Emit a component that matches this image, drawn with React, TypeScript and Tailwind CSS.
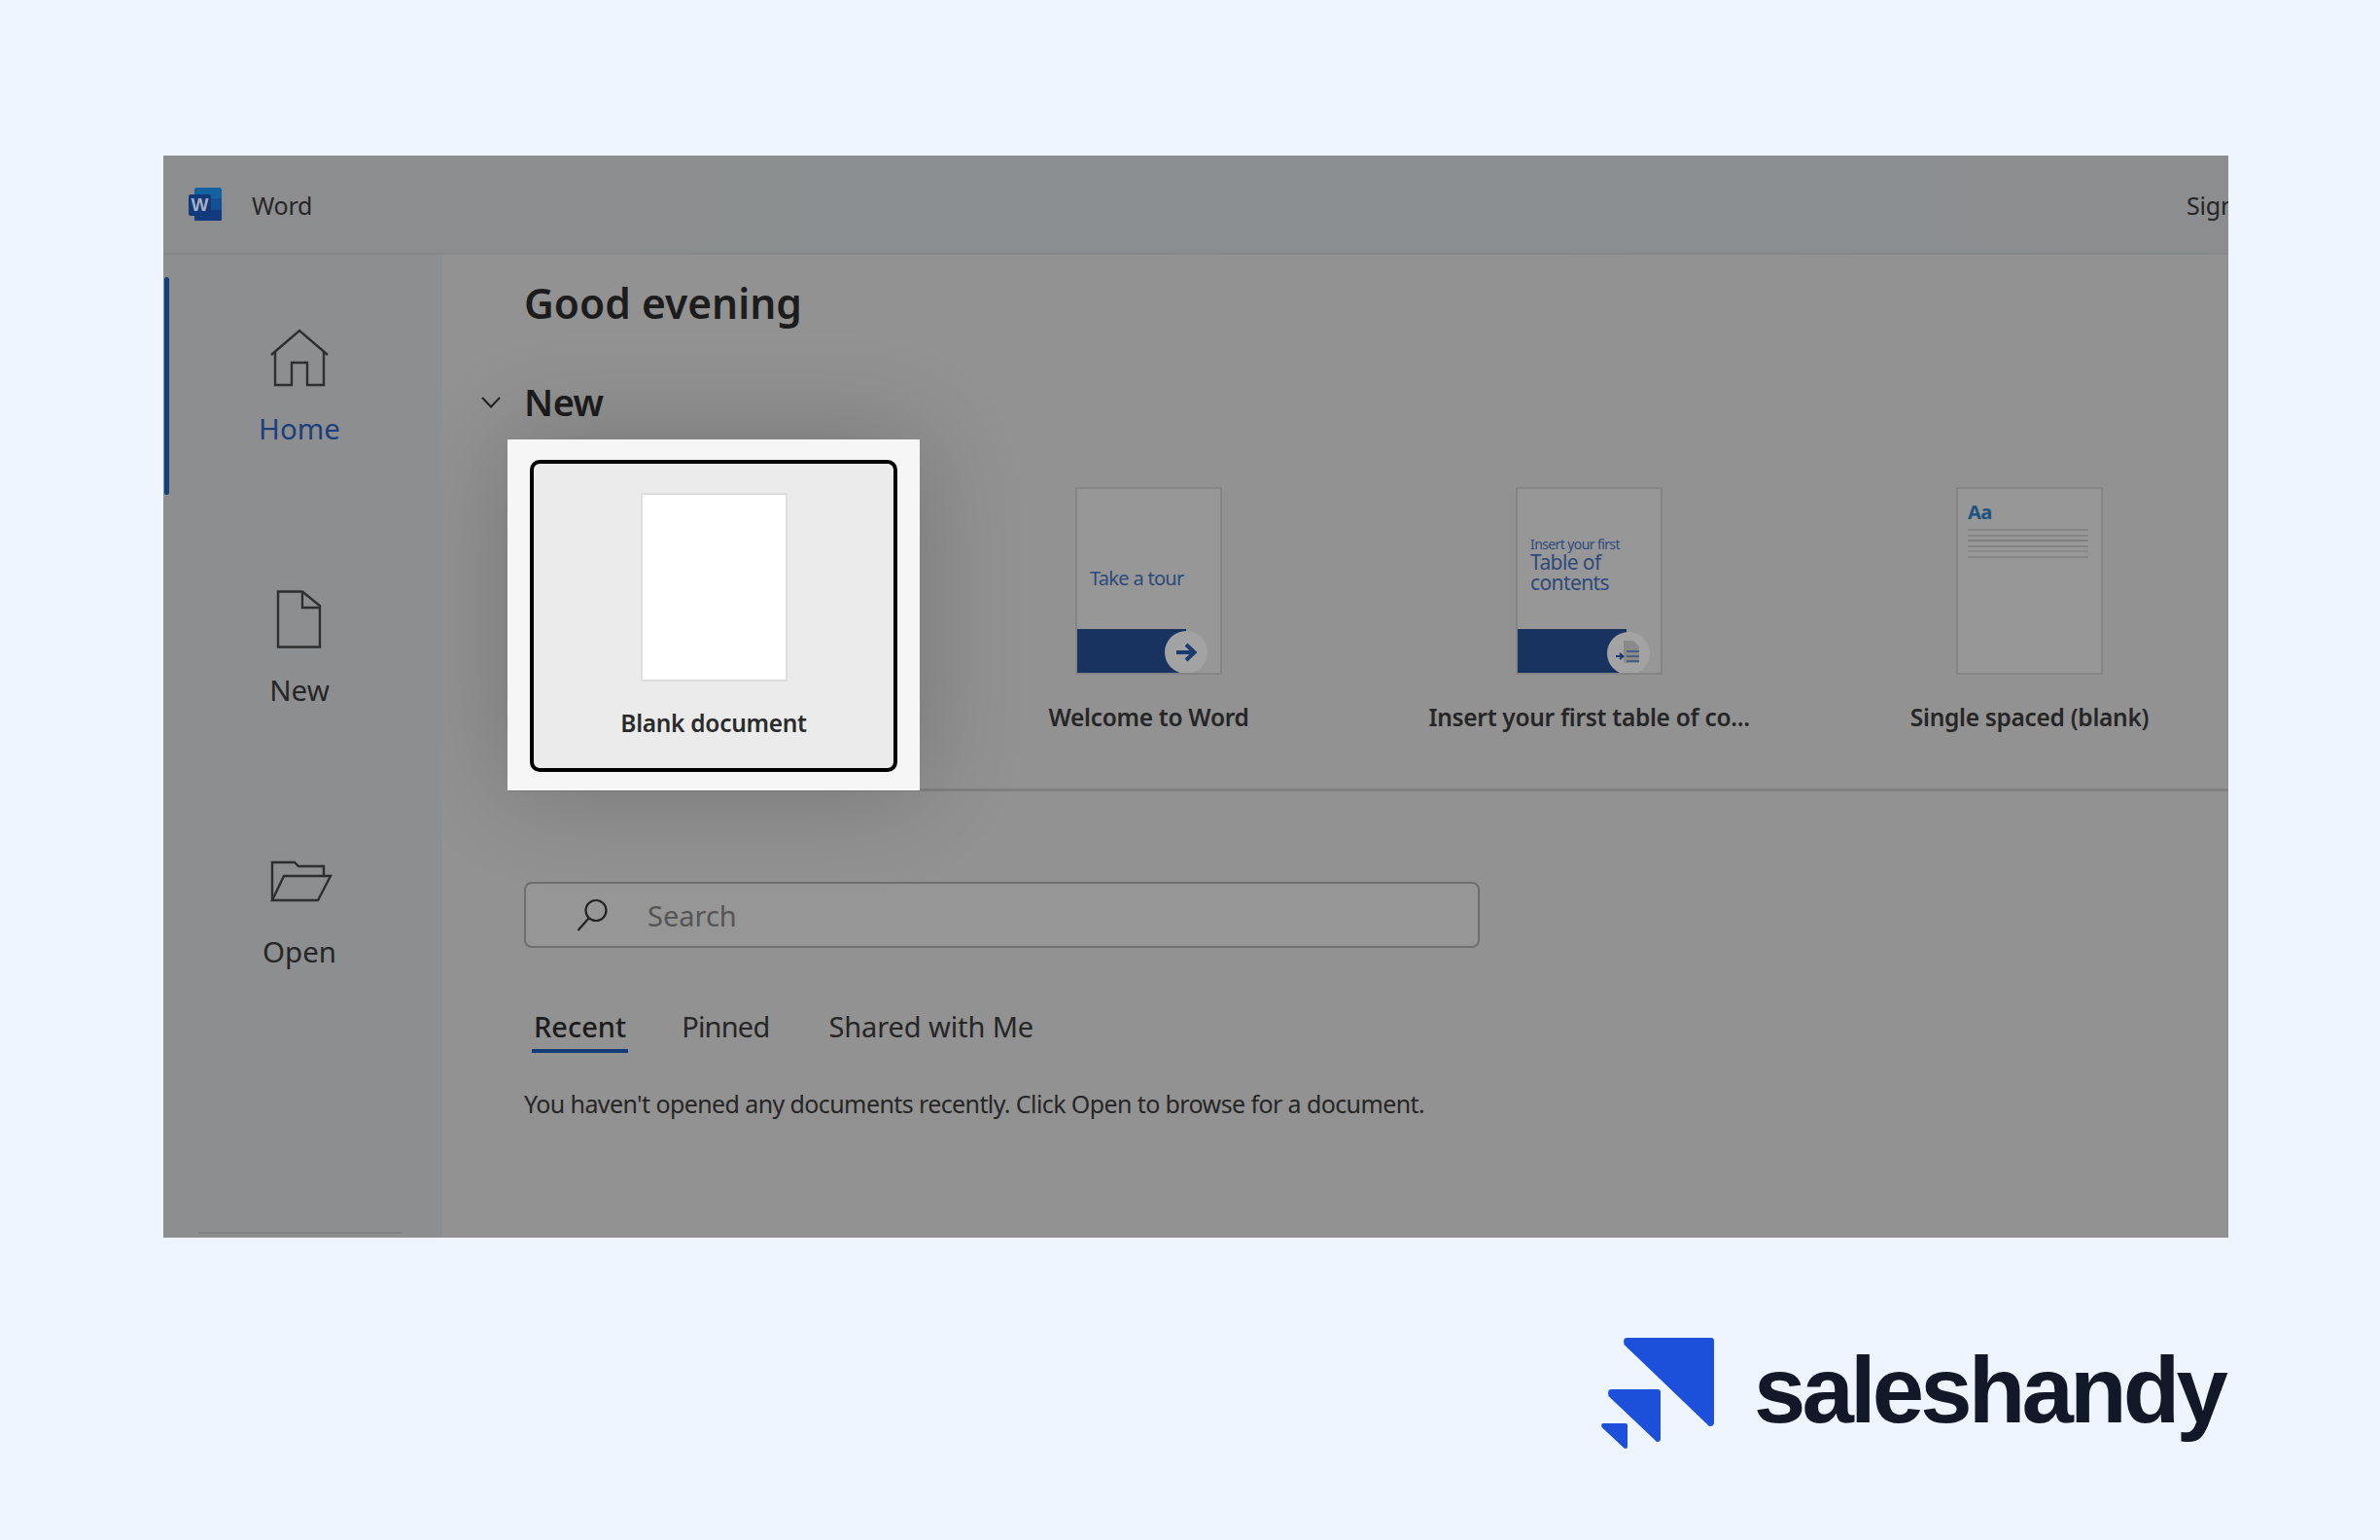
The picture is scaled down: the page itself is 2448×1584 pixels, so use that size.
import React from "react";

const font = "font-['Noto_Sans','Open_Sans',sans-serif]";

const HomeIcon = () => (
  <svg viewBox="0 0 60 60" className="w-[60px] h-[60px]" fill="none" stroke="#2e2e2e" strokeWidth="2.4">
    <path d="M1 27 L30 2 L59 27" />
    <path d="M5 24 V58 H22 V35 H38 V58 H55 V24" />
  </svg>
);

const DocIcon = () => (
  <svg viewBox="0 0 60 60" className="w-[60px] h-[60px]" fill="none" stroke="#2e2e2e" strokeWidth="2.4">
    <path d="M8 1.5 H33 L51 16 V58.5 H8 Z" />
    <path d="M33 1.5 V18 H51" />
  </svg>
);

const FolderIcon = () => (
  <svg viewBox="0 0 64 60" className="w-[64px] h-[60px] ml-[3px]" fill="none" stroke="#2e2e2e" strokeWidth="2.4">
    <path d="M2 50 V11 H25 L29 15 H55 V24" />
    <path d="M2 50 L14 25 H62 L49 50 Z" />
  </svg>
);

const WordLogo = () => (
  <svg viewBox="0 0 34 34" className="w-[34px] h-[34px] shrink-0">
    <rect x="6" y="0" width="28" height="34" rx="2" fill="#14619f" />
    <rect x="6" y="11" width="28" height="12" fill="#134f93" />
    <rect x="6" y="23" width="28" height="11" rx="1" fill="#123a7c" />
    <rect x="0" y="7" width="23" height="22" rx="2" fill="#113a7a" />
    <text x="11.5" y="24" textAnchor="middle" fontSize="19" fontWeight="700" fill="#a9afc0" fontFamily="Liberation Sans">
      W
    </text>
  </svg>
);

const NavItem = ({ icon, label, active }: { icon: React.ReactNode; label: string; active?: boolean }) => (
  <div className="relative h-[224px] flex flex-col items-center pt-[53px] pr-[7px]">
    {active && <div className="absolute left-[1px] top-0 w-[5px] h-[224px] rounded-full bg-[#143f78]" />}
    <div className="h-[60px] flex items-center justify-center">{icon}</div>
    <div className={`mt-[21px] text-[29.5px] leading-[44px] ${active ? "text-[#1c3f7c]" : "text-[#262626]"}`}>{label}</div>
  </div>
);

const Thumb = ({ children }: { children?: React.ReactNode }) => (
  <div className="relative w-[151px] h-[193px] border-2 border-[#858585] bg-[#979797] overflow-hidden">{children}</div>
);

const BlueBar = () => <div className="absolute left-0 bottom-0 w-[112px] h-[45px] bg-[#183360]" />;

const Slot = ({ label, children }: { label: string; children: React.ReactNode }) => (
  <div className="w-[453px] shrink-0 flex flex-col items-center pt-[49px]">
    {children}
    <div className="mt-[26px] text-[24.5px] leading-[36px] font-semibold text-[#262626] whitespace-nowrap tracking-[-0.3px]">{label}</div>
  </div>
);

const App: React.FC = () => {
  return (
    <div className={`w-[2448px] h-[1584px] bg-[#eef5ff] pt-[160px] pl-[168px] overflow-hidden ${font}`}>
      <div className="w-[2124px] h-[1113px] flex flex-col overflow-hidden bg-[#8c8e90]">
        {/* title bar */}
        <div className="h-[102px] shrink-0 flex items-center pl-[26px] border-b-2 border-[#86898b] bg-gradient-to-r from-[#8c8d8e] via-[#8a8e90] to-[#8b8d8f]">
          <WordLogo />
          <div className="ml-[31px] text-[25px] mt-[4px] text-[#262626] tracking-[-0.2px]">Word</div>
          <div className="ml-auto mr-[-35px] mt-[4px] text-[25px] text-[#262626] whitespace-nowrap tracking-[-0.2px]">Sign in</div>
        </div>

        <div className="flex-1 flex min-h-0">
          {/* sidebar */}
          <div className="w-[287px] shrink-0 flex flex-col pt-[23px] gap-[45px]">
            <NavItem icon={<HomeIcon />} label="Home" active />
            <NavItem icon={<DocIcon />} label="New" />
            <NavItem icon={<FolderIcon />} label="Open" />
            <div className="mt-auto mb-[4px] ml-[36px] w-[209px] h-[2px] bg-[#808284]" />
          </div>

          {/* main */}
          <div className="flex-1 min-w-0 overflow-hidden bg-[#929292] pl-[84px] pt-[24px]">
            <div className="h-[52px] leading-[52px] text-[42.5px] font-semibold text-[#1c1c1c] whitespace-nowrap">Good evening</div>

            <div className="relative mt-[51px] h-[48px] flex items-center">
              <svg viewBox="0 0 20 12" className="absolute left-[-44px] top-[19px] w-[20px] h-[12px]" fill="none" stroke="#222" strokeWidth="2">
                <path d="M1 1 L10 10.5 L19 1" />
              </svg>
              <div className="text-[38px] leading-[48px] font-semibold text-[#1c1c1c] tracking-[-0.5px]">New</div>
            </div>

            <div className="mt-[15px] ml-[-17px] h-[362px] border-b-[3px] border-[#808080] flex">
              <div className="relative z-10 w-[424px] h-[361px] shrink-0 bg-[#f6f6f6] pt-[21px] pl-[23px] shadow-[0_0_100px_rgba(0,0,0,0.2)]">
                <div className="w-[378px] h-[321px] border-4 border-black rounded-[10px] bg-[#ebebeb] flex flex-col items-center pt-[30px]">
                  <div className="w-[151px] h-[194px] bg-white border-2 border-[#dedede]" />
                  <div className="mt-[25px] text-[24.5px] leading-[36px] font-semibold text-[#2b2b2b] tracking-[-0.3px]">Blank document</div>
                </div>
              </div>

              <div className="ml-[9px] flex">
                <Slot label="Welcome to Word">
                  <Thumb>
                    <div className="pl-[13px] pt-[78px] text-[20px] leading-[28px] text-[#2c4a7c] tracking-[-0.7px] whitespace-nowrap">Take a tour</div>
                    <BlueBar />
                    <div className="absolute left-[90px] top-[146px] w-[44px] h-[44px] rounded-full bg-[#a3a3a3] flex items-center justify-center">
                      <svg viewBox="0 0 22 20" className="w-[22px] h-[20px]" fill="none" stroke="#1a3a70" strokeWidth="4">
                        <path d="M1 10 H19" />
                        <path d="M11 2 L19.5 10 L11 18" />
                      </svg>
                    </div>
                  </Thumb>
                </Slot>
                <Slot label="Insert your first table of co...">
                  <Thumb>
                    <div className="pl-[13px] pt-[48px] text-[#2c4a7c] whitespace-nowrap tracking-[-0.6px]">
                      <div className="text-[14px] h-[17px] leading-[17px]">Insert your first</div>
                      <div className="text-[21px] h-[21px] leading-[21px]">Table of</div>
                      <div className="text-[21px] h-[21px] leading-[21px]">contents</div>
                    </div>
                    <BlueBar />
                    <div className="absolute left-[92px] top-[147px] w-[44px] h-[44px] rounded-full bg-[#a3a3a3]">
                      <svg viewBox="0 0 44 44" className="w-[44px] h-[44px]" fill="none">
                        <path d="M17 9 H27 L33 15 V32 H17 Z" fill="#8a8a8a" />
                        <path d="M9 25 H16 M13 22 L16.5 25 L13 28" stroke="#1a3a70" strokeWidth="2" />
                        <path d="M20 20 H33 M20 25 H33 M20 30 H33" stroke="#38527e" strokeWidth="1.6" />
                      </svg>
                    </div>
                  </Thumb>
                </Slot>
                <Slot label="Single spaced (blank)">
                  <Thumb>
                    <div className="pl-[10px] pt-[11px] text-[20px] leading-[26px] font-bold text-[#1b5482] tracking-[-0.5px]">Aa</div>
                    <div className="ml-[10px] mt-[4px] w-[124px] flex flex-col gap-[3.6px]">
                      <div className="h-[2px] bg-[#858585]" />
                      <div className="h-[2px] bg-[#858585]" />
                      <div className="h-[2px] bg-[#7f7f7f]" />
                      <div className="h-[2px] bg-[#858585]" />
                      <div className="h-[2px] bg-[#8a8a8a]" />
                      <div className="h-[2px] bg-[#858585]" />
                    </div>
                  </Thumb>
                </Slot>
              </div>
            </div>

            <div className="mt-[93px] w-[983px] h-[68px] rounded-[8px] border-2 border-[#6f6f6f] bg-[#969696] flex items-center pl-[52px]">
              <svg viewBox="0 0 34 34" className="w-[34px] h-[34px]" fill="none" stroke="#222" strokeWidth="2.2">
                <circle cx="20" cy="12.5" r="10.5" />
                <path d="M13 20 L1.5 33" />
              </svg>
              <div className="ml-[39px] mt-[2px] text-[29px] leading-[40px] text-[#555555]">Search</div>
            </div>

            <div className="mt-[61px] ml-[8px] flex items-start">
              <div className="flex flex-col items-center">
                <div className="px-[2px] text-[29px] leading-[40px] font-medium text-[#1c1c1c] whitespace-nowrap">Recent</div>
                <div className="mt-[3px] w-full h-[4px] bg-[#163c78]" />
              </div>
              <div className="ml-[55px] text-[29px] leading-[40px] text-[#262626] tracking-[-0.8px]">Pinned</div>
              <div className="ml-[61px] text-[29px] leading-[40px] text-[#262626] whitespace-nowrap tracking-[-0.1px]">Shared with Me</div>
            </div>

            <div className="mt-[34px] text-[25px] leading-[36px] text-[#262626] whitespace-nowrap tracking-[-0.6px]">
              You haven't opened any documents recently. Click Open to browse for a document.
            </div>
          </div>
        </div>
      </div>

      {/* saleshandy logo */}
      <div className="w-[2124px] pt-[103px] flex justify-end items-start">
        <svg viewBox="0 0 116 114" className="w-[116px] h-[114px] shrink-0">
          <path d="M26 0 H113 Q116 0 116 3 V87 Q116 91 112 91 Q110 91 109 89 L23.5 7 Q22 0 26 0 Z" fill="#1c50db" />
          <path d="M10 53 H58 Q61 53 61 56 V104 Q61 107 58 107 Q56 107 55 105 L7.5 60 Q6 53 10 53 Z" fill="#1c50db" />
          <path d="M2 88 H25 Q27 88 27 90 V112 Q27 114 25 114 Q24 114 23 113 L0.5 92 Q-0.5 88 2 88 Z" fill="#1c50db" />
        </svg>
        <div className="ml-[41px] mt-[-2px] mr-[4px] font-['Liberation_Sans',sans-serif] font-bold text-[96px] leading-[112px] tracking-[-3.9px] text-[#111827] whitespace-nowrap">
          saleshandy
        </div>
      </div>
    </div>
  );
};

export default App;
